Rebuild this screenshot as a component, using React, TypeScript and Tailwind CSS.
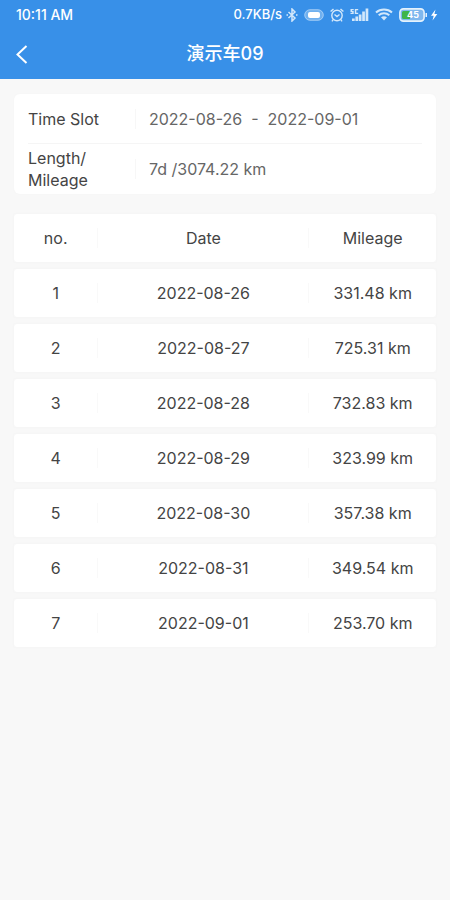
import type { ReactNode } from 'react';

interface Trip {
  date: string;
  mileage: string;
}

const TRIPS: Trip[] = [
  { date: '2022-08-26', mileage: '331.48' },
  { date: '2022-08-27', mileage: '725.31' },
  { date: '2022-08-28', mileage: '732.83' },
  { date: '2022-08-29', mileage: '323.99' },
  { date: '2022-08-30', mileage: '357.38' },
  { date: '2022-08-31', mileage: '349.54' },
  { date: '2022-09-01', mileage: '253.70' },
];

function StatusIcons() {
  return (
    <div className="flex items-center gap-1.5 text-[#d3e8fb]">
      {/* Bluetooth */}
      <svg width="12" height="14" viewBox="0 0 12 14" fill="none" stroke="currentColor" strokeWidth="1.5">
        <path d="M2.5 4 9 10 6 13V1l3 3-6.5 6" />
        <path d="M.5 7h1.5M10 7h1.5" />
      </svg>
      {/* Earbuds battery */}
      <svg width="20" height="12" viewBox="0 0 20 12" fill="none" stroke="currentColor">
        <rect x="0.7" y="0.7" width="18.6" height="10.6" rx="5.3" fill="#6fb0ef" strokeOpacity="0.6" />
        <rect x="4" y="3" width="12" height="6" rx="2" fill="#ffffff" stroke="none" />
      </svg>
      {/* Alarm */}
      <svg width="14" height="14" viewBox="0 0 14 14" fill="none" stroke="currentColor" strokeWidth="1.4">
        <circle cx="7" cy="7.5" r="5.2" />
        <path d="M.6 3.5 3.5 1M13.4 3.5 10.5 1M4.500 6.500 7 8.500l2.500-2M3.200 11.500 2 13.400M10.800 11.500l1.200 1.900" />
      </svg>
      {/* Signal */}
      <svg width="19" height="13" viewBox="0 0 19 13" fill="currentColor">
        <path d="M2 10.500h2.700V13H2zM5.400 8.500h2.700V13H5.400zM8.800 6.500h2.700V13H8.800zM12.200 3.500h2.700V13h-2.700zM15.600.5h2.700V13h-2.700z" />
        <path d="M.5 1h3.200v1.300H2v.6h1.700V6H.5V4.700h1.700v-.6H.5zM4.800 1h3.400v1.300H6.300v2.400h1.900V6H4.800z" />
      </svg>
      {/* Wi-Fi */}
      <svg width="18" height="13" viewBox="0 0 18 13" fill="none" stroke="currentColor" strokeWidth="2">
        <path d="M1 4.500C5.500.5 12.500.5 17 4.500M3.700 7.300c3-2.600 7.600-2.600 10.600 0" />
        <path d="M6 9.300c1.800-1.300 4.200-1.300 6 0L9 12.500z" fill="currentColor" stroke="none" />
      </svg>
      {/* Battery */}
      <svg width="39" height="14" viewBox="0 0 39 14">
        <rect x="0.9" y="0.9" width="24.2" height="12.200" rx="3.500" fill="#7fb8ee" stroke="#e4f2fd" strokeWidth="1.600" />
        <path d="M4.500 3H11v8H4.500A1.500 1.500 0 0 1 3 9.500v-5A1.500 1.500 0 0 1 4.500 3z" fill="#3fb54a" />
        <path d="M26.500 5h1.500v4h-1.500z" fill="#e4f2fd" />
        <text
          x="14"
          y="10"
          textAnchor="middle"
          fill="#ffffff"
          className="font-['Inter'] text-[9px] font-bold"
        >
          45
        </text>
        <path d="M36.500 1.500 32 7.800h2.700L33.500 12.500l4.800-6.500h-2.900z" fill="#ffffff" />
      </svg>
    </div>
  );
}

interface SummaryRowProps {
  label: ReactNode;
  children: ReactNode;
}

function SummaryRow({ label, children }: SummaryRowProps) {
  return (
    <div className="flex min-h-[50px] items-center border-b border-[#f5f5f5] last:border-b-0">
      <dt className="w-[107px] shrink-0 leading-[22px] text-[#444444]">{label}</dt>
      <dd className="flex items-center gap-[13px] text-[#666666]">
        <span className="h-5 border-l border-[#f7f7f7]" />
        <span className="whitespace-pre">{children}</span>
      </dd>
    </div>
  );
}

const CELL = 'h-12 bg-white p-0 text-center font-normal';
const DIVIDED = 'border-r border-[#f9f9f9] leading-5';

export default function App() {
  return (
    <div className="min-h-screen bg-[#f8f8f8] font-['Inter','Noto_Sans_CJK_SC',sans-serif] text-base">
      <header className="bg-[#3890e8] text-white">
        <div className="flex h-[29px] items-center justify-between pr-3 pl-4 font-medium">
          <span className="text-sm">10:11 AM</span>
          <div className="flex items-center gap-1">
            <span className="text-[13px]">0.7KB/s</span>
            <StatusIcons />
          </div>
        </div>
        <div className="grid h-[50px] grid-cols-[56px_1fr_56px] items-center">
          <button type="button" aria-label="Back" className="flex h-full items-center pl-4">
            <svg width="12" height="19" viewBox="0 0 12 19" fill="none" stroke="currentColor" strokeWidth="2">
              <path d="M10.500 1 1.500 9.500l9 8.500" />
            </svg>
          </button>
          <h1 className="text-center text-lg font-medium">演示车09</h1>
        </div>
      </header>

      <main className="px-[14px] pt-[15px]">
        <dl className="rounded-md bg-white px-[14px] shadow-[0_0_2px_#f4f4f4]">
          <SummaryRow label="Time Slot">{'2022-08-26  -  2022-09-01'}</SummaryRow>
          <SummaryRow
            label={
              <>
                Length/
                <br />
                Mileage
              </>
            }
          >
            7d /3074.22 km
          </SummaryRow>
        </dl>

        <table className="mt-[13px] w-full table-fixed border-separate border-spacing-x-0 border-spacing-y-[7px] text-[#444444]">
          <thead>
            <tr className="shadow-[0_0_2px_#f2f2f2]">
              <th scope="col" className={`${CELL} w-1/5 rounded-l-sm`}>
                <div className={DIVIDED}>no.</div>
              </th>
              <th scope="col" className={`${CELL} w-1/2`}>
                <div className={DIVIDED}>Date</div>
              </th>
              <th scope="col" className={`${CELL} rounded-r-sm`}>Mileage</th>
            </tr>
          </thead>
          <tbody>
            {TRIPS.map((trip, i) => (
              <tr key={trip.date} className="shadow-[0_0_2px_#f2f2f2]">
                <td className={`${CELL} rounded-l-sm`}>
                  <div className={DIVIDED}>{i + 1}</div>
                </td>
                <td className={CELL}>
                  <div className={DIVIDED}>{trip.date}</div>
                </td>
                <td className={`${CELL} rounded-r-sm`}>{trip.mileage} km</td>
              </tr>
            ))}
          </tbody>
        </table>
      </main>
    </div>
  );
}
